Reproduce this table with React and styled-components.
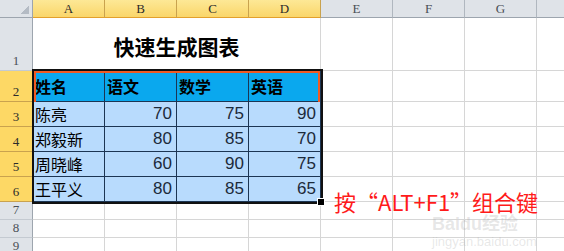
import React from "react";
import styled, { createGlobalStyle, css } from "styled-components";

const GlobalStyle = createGlobalStyle`
  html, body {
    margin: 0;
    padding: 0;
    background: #fff;
    overflow: hidden;
  }
`;

const COLS = ["A", "B", "C", "D", "E", "F", "G", "H"];
const ROW_HEIGHTS = [53, 31, 25, 25, 25, 25, 18, 18, 18];

const headers = ["姓名", "语文", "数学", "英语"];
const rows = [
  ["陈亮", 70, 75, 90],
  ["郑毅新", 80, 85, 70],
  ["周晓峰", 60, 90, 75],
  ["王平义", 80, 85, 65]
];

const Sheet = styled.div`
  position: relative;
  width: 564px;
  height: 251px;
  overflow: hidden;
`;

const Grid = styled.div`
  display: grid;
  grid-template-columns: 33px repeat(8, 72px);
  grid-template-rows: 18px ${ROW_HEIGHTS.map(h => h + "px").join(" ")};
`;

const Corner = styled.div`
  position: relative;
  box-sizing: border-box;
  background: #dfe3e8;
  border-right: 1px solid #9da5ae;
  border-bottom: 1px solid #9da5ae;
  &::after {
    content: "";
    position: absolute;
    right: 3px;
    bottom: 3px;
    width: 9px;
    height: 9px;
    background: linear-gradient(135deg, transparent 50%, #b4bbc4 50%);
  }
`;

const ColHead = styled.div`
  box-sizing: border-box;
  display: flex;
  align-items: center;
  justify-content: center;
  overflow: hidden;
  font-family: "Liberation Serif", serif;
  font-size: 13px;
  color: #4a4f55;
  background: #dfe3e8;
  border-right: 1px solid #b0b7bf;
  border-bottom: 1px solid #9da5ae;
  ${p =>
    p.$selected &&
    css`
      color: #2b2b2b;
      background: linear-gradient(#fde896, #fad66a);
      border-right-color: #c9a24e;
      border-bottom-color: #e3a02c;
    `}
`;

const RowHead = styled.div`
  box-sizing: border-box;
  display: flex;
  align-items: flex-end;
  justify-content: center;
  padding-bottom: 1px;
  font-family: "Liberation Serif", serif;
  font-size: 13px;
  color: #4a4f55;
  background: #dfe3e8;
  border-right: 1px solid #9da5ae;
  border-bottom: 1px solid #c4cad1;
  ${p =>
    p.$selected &&
    css`
      color: #2b2b2b;
      background: #fdd865;
      border-right-color: #e2a33c;
      border-bottom-color: #c9a24e;
    `}
`;

const Cell = styled.div`
  box-sizing: border-box;
  border-right: 1px solid #d6d6d6;
  border-bottom: 1px solid #d6d6d6;
`;

const TitleCell = styled(Cell)`
  grid-column: span 4;
  display: flex;
  align-items: center;
  justify-content: center;
  padding-top: 4px;
  font-family: "Noto Sans CJK SC", sans-serif;
  font-weight: 700;
  font-size: 21px;
  color: #000;
`;

const TableCell = styled.div`
  box-sizing: border-box;
  display: flex;
  align-items: center;
  justify-content: ${p => (p.$num ? "flex-end" : "flex-start")};
  padding: 0 4px 0 2px;
  font-family: ${p =>
    p.$num ? `"Liberation Sans", Arial, sans-serif` : `"Noto Sans CJK SC", sans-serif`};
  font-size: ${p => (p.$num ? "17px" : "16px")};
  font-weight: ${p => (p.$head ? 700 : 400)};
  color: ${p => (p.$num ? "#1c2a3a" : "#000")};
  background: ${p => (p.$head ? "#0aa8ee" : "#b8dbfd")};
  border-right: 1px solid #1c3553;
  border-bottom: 1px solid #1c3553;
`;

const Selection = styled.div`
  position: absolute;
  left: 32px;
  top: 69px;
  width: 291px;
  height: 135px;
  box-sizing: border-box;
  border: 2px solid #111;
  pointer-events: none;
`;

const HeaderMark = styled.div`
  position: absolute;
  left: 34px;
  top: 71px;
  width: 286px;
  height: 31px;
  box-sizing: border-box;
  border: 2px solid #f05a23;
  border-bottom: none;
  pointer-events: none;
`;

const Handle = styled.div`
  position: absolute;
  left: 318px;
  top: 199px;
  width: 6px;
  height: 6px;
  background: #000;
  outline: 1px solid #fff;
`;

const Note = styled.div`
  position: absolute;
  left: 334px;
  top: 188px;
  font-family: "Noto Sans CJK SC", sans-serif;
  font-size: 22px;
  line-height: 26px;
  color: #ff1a1a;
  white-space: nowrap;
`;

const Watermark = styled.div`
  position: absolute;
  left: 432px;
  top: 215px;
  display: flex;
  flex-direction: column;
  font-family: "Liberation Sans", "Noto Sans CJK SC", sans-serif;
  color: rgba(170, 170, 170, 0.28);
  pointer-events: none;
`;

const MarkBrand = styled.span`
  font-size: 18px;
  font-weight: 700;
  line-height: 19px;
`;

const MarkSite = styled.span`
  font-size: 13px;
  line-height: 15px;
`;

function BlankCells({ from }) {
  return COLS.slice(from).map(c => <Cell key={c} />);
}

export default function App() {
  return (
    <>
      <GlobalStyle />
      <Sheet>
        <Grid>
          <Corner />
          {COLS.map((c, i) => (
            <ColHead key={c} $selected={i < 4}>
              {c}
            </ColHead>
          ))}

          <RowHead>1</RowHead>
          <TitleCell>快速生成图表</TitleCell>
          <BlankCells from={4} />

          <RowHead $selected>2</RowHead>
          {headers.map(h => (
            <TableCell key={h} $head>
              {h}
            </TableCell>
          ))}
          <BlankCells from={4} />

          {rows.map((r, i) => (
            <React.Fragment key={r[0]}>
              <RowHead $selected>{i + 3}</RowHead>
              {r.map((v, j) => (
                <TableCell key={j} $num={j > 0}>
                  {v}
                </TableCell>
              ))}
              <BlankCells from={4} />
            </React.Fragment>
          ))}

          {[7, 8, 9].map(n => (
            <React.Fragment key={n}>
              <RowHead>{n}</RowHead>
              <BlankCells from={0} />
            </React.Fragment>
          ))}
        </Grid>

        <HeaderMark />
        <Selection />
        <Handle />
        <Watermark>
          <MarkBrand>Baidu经验</MarkBrand>
          <MarkSite>jingyan.baidu.com</MarkSite>
        </Watermark>
        <Note>按“ALT+F1”组合键</Note>
      </Sheet>
    </>
  );
}
